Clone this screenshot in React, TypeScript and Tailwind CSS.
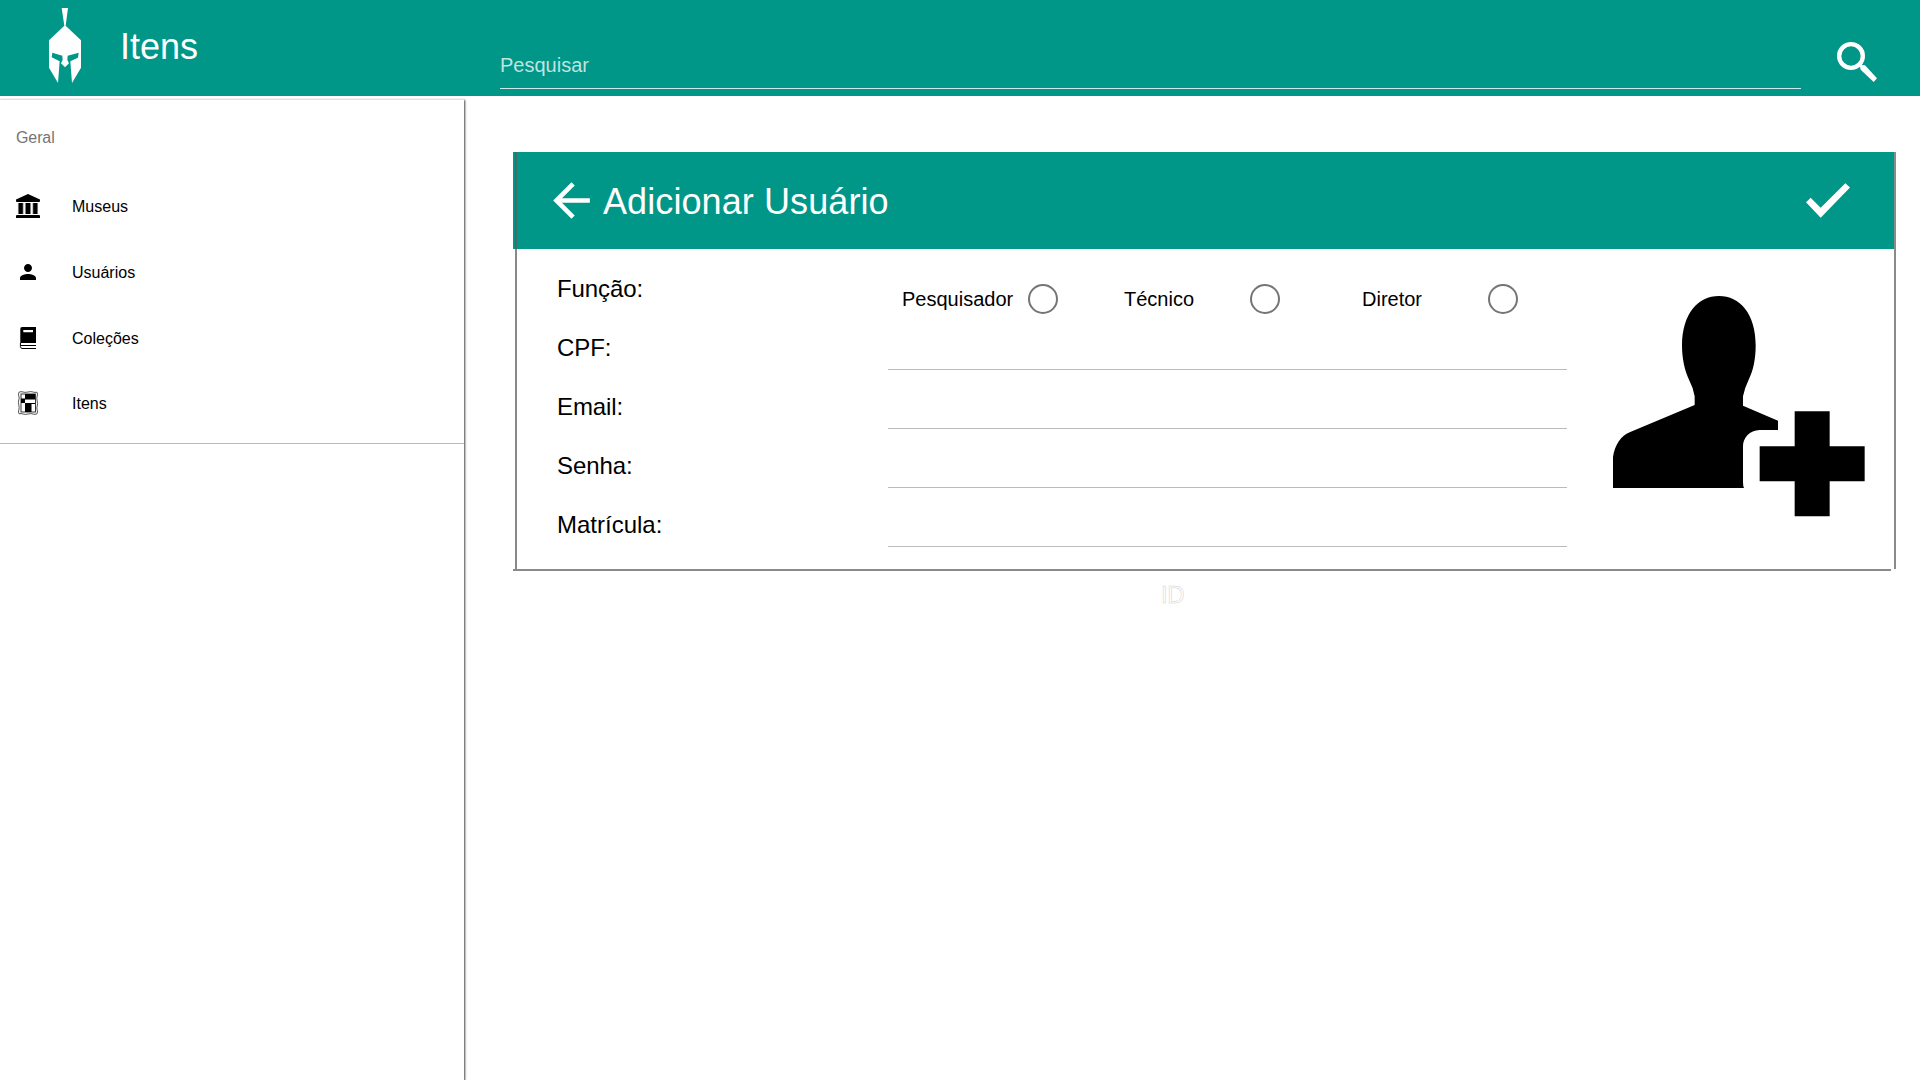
import React from "react";

const MuseumIcon = () => (
  <svg width="24" height="24" viewBox="0 0 24 24">
    <path d="M12 0 24 5.4V7Q24 8 23 8H1Q0 8 0 7V5.4ZM2 9H7V20H2ZM9.3 9H14.7V20H9.3ZM17 9H22V20H17ZM1 21H23Q24 21 24 22V24H0V22Q0 21 1 21Z" />
    <path d="M2.4 9V20M7.2 9V20M9.4 9V20M14.6 9V20M16.8 9V20M21.6 9V20" stroke="#999" strokeWidth=".8" />
  </svg>
);

const PersonIcon = () => (
  <svg width="24" height="24" viewBox="0 0 24 24">
    <path d="M12 12c2.21 0 4-1.79 4-4s-1.79-4-4-4-4 1.79-4 4 1.79 4 4 4zm0 2c-2.67 0-8 1.34-8 4v2h16v-2c0-2.66-5.33-4-8-4z" />
  </svg>
);

const BookIcon = () => (
  <svg width="24" height="24" viewBox="0 0 24 24">
    <path d="M6 1H20V17H5.5Q4.7 17 4.3 17.6V2.8Q4.3 1 6 1ZM7.3 4V6.3H17V4Z" fillRule="evenodd" />
    <path d="M20 19.5H5M20 22.5H6Q4.4 22.2 4.4 20.4V17" fill="none" stroke="#000" strokeWidth="1" />
  </svg>
);

const ItemsIcon = () => (
  <svg width="24" height="24" viewBox="0 0 24 24">
    <path d="M3 1.2Q5 .2 7 1T12 1 17 1 21 1.2Q22 3 21.2 5T21.2 10 21.2 15 21.2 19 21 22.8Q19 23.8 17 23T12 23 7 23 3 22.8Q2 21 2.8 19T2.8 14 2.8 9 2.8 5 3 1.2Z" fill="none" stroke="#444" strokeWidth=".9" />
    <rect x="5" y="3" width="14.5" height="18" fill="none" stroke="#222" strokeWidth=".9" />
    <path d="M9 3H19V8.5H9ZM5 7.5H9V12H19V13H15.5V21H9V12H5Z" />
    <path d="M9.5 9.2H19V11H9.5Z" fill="#fff" />
  </svg>
);

const navItems = [
  { label: "Museus", icon: <MuseumIcon /> },
  { label: "Usuários", icon: <PersonIcon /> },
  { label: "Coleções", icon: <BookIcon /> },
  { label: "Itens", icon: <ItemsIcon /> },
];

const fields = ["CPF:", "Email:", "Senha:", "Matrícula:"];

function Header() {
  return (
    <header className="flex h-24 items-start bg-[#009688] text-white">
      <svg className="ml-[49px] mt-2 shrink-0" width="32" height="75" viewBox="147 24 96 225">
        <path
          fill="#fff"
          d="M185 24H204L197 77 243 121V203L216 249 211 184 234 173 236 158 203 167 202 180 207 190 195 202 183 190 188 180 187 167 157 158 155 172 179 184 174 249 147 203V121L193 77Z"
        />
      </svg>
      <h1 className="ml-[39px] mt-6 w-[380px] shrink-0 text-[36px] leading-[46px]">Itens</h1>
      <div className="mt-12 h-[41px] w-[1301px] shrink-0 border-b border-white/80">
        <input
          className="block h-[34px] w-full bg-transparent text-[20px] text-white outline-none placeholder:text-white/75"
          placeholder="Pesquisar"
        />
      </div>
      <svg className="ml-9 mt-[42px] shrink-0" width="40" height="40" viewBox="231 66 120 120">
        <circle cx="273" cy="108" r="35.5" fill="none" stroke="#fff" strokeWidth="13" />
        <path d="M299 134 315 136 351 175 341 186 302 149Z" fill="#fff" />
      </svg>
    </header>
  );
}

function Sidebar() {
  return (
    <aside className="mt-[3px] w-[464px] shrink-0 border-t border-[#e0e0e0] shadow-[1px_1px_2px_#444]">
      <nav className="h-[344px] border-b-1 border-[#b9b9b9] pt-[26px]">
        <p className="mb-[44px] pl-4 text-[16px] leading-6 tracking-[-0.1px] text-[#757575]">Geral</p>
        <ul>
          {navItems.map((item) => (
            <li key={item.label} className="mb-[42px] flex h-6 items-center gap-8 pl-4 text-[16px] leading-6 last:-mt-[43px] last:pt-0 last:-mt-px">
              {item.icon}
              <span className="pt-px">{item.label}</span>
            </li>
          ))}
        </ul>
      </nav>
    </aside>
  );
}

function Role({ label, className }: { label: string; className: string }) {
  return (
    <label className={`flex items-center justify-between text-[20px] ${className}`}>
      {label}
      <input type="radio" name="funcao" className="size-[30px] appearance-none rounded-full border-2 border-[#757575]" />
    </label>
  );
}

function UserCard() {
  return (
    <section className="relative h-[419px] w-[1383px]">
      <div className="flex h-[97px] w-[1381px] items-center bg-[#009688] text-white">
        <svg className="ml-[31px] shrink-0" width="55" height="55" viewBox="0 0 24 24" fill="#fff">
          <path d="M20 11H7.83l5.59-5.59L12 4l-8 8 8 8 1.41-1.41L7.83 13H20v-2z" />
        </svg>
        <h2 className="ml-[4px] mt-0.5 text-[36px] leading-[46px] tracking-[0.09px]">Adicionar Usuário</h2>
        <svg className="ml-auto mr-11 shrink-0" width="44" height="35" viewBox="138 488 132 104" fill="#fff">
          <path d="M138 545 152 532 182 562 256 488 270 501 182 592Z" />
        </svg>
      </div>

      <div className="flex">
        <div className="ml-11 w-[331px] pt-[10px] text-[24px] leading-[59px]">
          {["Função:", ...fields].map((label) => (
            <div key={label} className="h-[59px] tracking-[-0.1px] last:tracking-normal">
              {label}
            </div>
          ))}
        </div>
        <div className="w-[679px]">
          <div className="flex h-[62px] items-start pl-[14px] pt-[35px]">
            <Role label="Pesquisador" className="w-[156px]" />
            <Role label="Técnico" className="ml-[66px] w-[156px]" />
            <Role label="Diretor" className="ml-[82px] w-[156px]" />
          </div>
          {fields.map((label) => (
            <input key={label} aria-label={label} className="block h-[59px] w-full border-b border-[#bbb] outline-none" />
          ))}
        </div>
        <svg className="ml-[46px] mt-[47px]" width="252" height="221" viewBox="160 77 756 663">
          <path d="M478 77C540 77 588 130 588 225C588 265 581 300 567 328Q556 350 550 378V406L655 451V479H600C570 480 550 502 550 528V635Q550 648 553 653H160V560C165 525 185 495 210 486L405 404V378Q400 350 388 328C375 300 367 265 367 225C368 130 415 77 478 77Z" />
          <path d="M705 423H810V528H915V633H810V738H705V633H600V528H705Z" />
        </svg>
      </div>

      <span className="absolute left-[2px] top-0 h-[418px] w-[2px] bg-[#5c5c5c]/72" />
      <span className="absolute left-[1381px] top-0 h-[417px] w-[2px] bg-[#8a8a8a]" />
      <span className="absolute left-0 top-[417px] h-[2px] w-[1378px] bg-[#8a8a8a]" />
    </section>
  );
}

export default function App() {
  return (
    <div className="flex h-[1080px] w-[1920px] flex-col overflow-hidden bg-white font-['Liberation_Sans',Arial,sans-serif] text-black">
      <Header />
      <div className="flex flex-1">
        <Sidebar />
        <main className="ml-[49px] pt-14">
          <UserCard />
          <p className="ml-[648px] mt-[12px] text-[24px] leading-[24px] tracking-[-0.5px] text-white [-webkit-text-stroke:0.5px_#d0d0d0]">ID</p>
        </main>
      </div>
    </div>
  );
}
